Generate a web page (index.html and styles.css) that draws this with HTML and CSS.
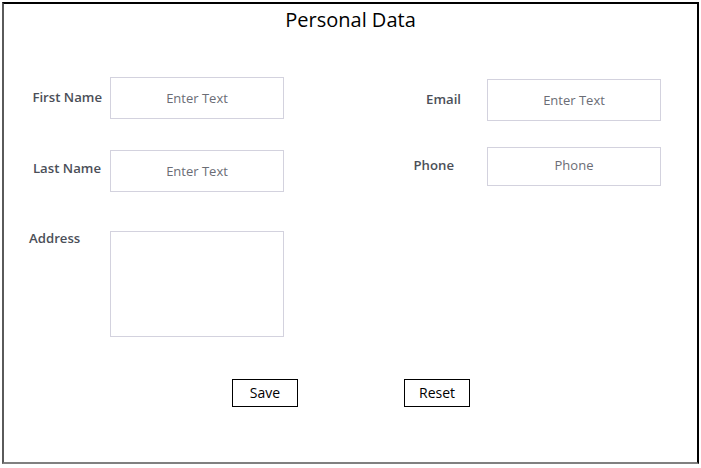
FILE: index.html
```html
<!DOCTYPE html>
<html>
<head>
    <title>Personal Data</title>
    <link rel="stylesheet" href="styles.css">
</head>
<body>
    <div class="frame">
        <h1 class="title">Personal Data</h1>
        <div class="columns">
            <div class="col col-left">
                <div class="field field-first">
                    <label for="firstName">First Name</label>
                    <input type="text" id="firstName" placeholder="Enter Text">
                </div>
                <div class="field field-last">
                    <label for="lastName">Last Name</label>
                    <input type="text" id="lastName" placeholder="Enter Text">
                </div>
                <div class="field field-address">
                    <label for="address">Address</label>
                    <textarea id="address"></textarea>
                </div>
            </div>
            <div class="col col-right">
                <div class="field field-email">
                    <label for="email">Email</label>
                    <input type="text" id="email" placeholder="Enter Text">
                </div>
                <div class="field field-phone">
                    <label for="phone">Phone</label>
                    <input type="text" id="phone" placeholder="Phone">
                </div>
            </div>
        </div>
        <div class="actions">
            <button type="button">Save</button>
            <button type="button">Reset</button>
        </div>
    </div>
</body>
</html>
```

FILE: styles.css
```css
body {
    margin: 0;
    background: #fff;
    font-family: "Open Sans", Arial, sans-serif;
}
.frame {
    box-sizing: border-box;
    width: 697px;
    height: 462px;
    margin: 2px 0 0 2px;
    border-top: 2px solid #000;
    border-right: 2px solid #000;
    border-left: 2px solid #5a5a5a;
    border-bottom: 2px solid #808080;
}
.title {
    margin: 0;
    padding-top: 2px;
    font-size: 20px;
    font-weight: 400;
    line-height: 28px;
    text-align: center;
    color: #000;
}
.columns {
    display: flex;
}
.col-left {
    width: 280px;
}
.col-right {
    width: 277px;
    margin-left: 100px;
}
.field {
    display: flex;
    align-items: center;
}
.field label {
    box-sizing: border-box;
    flex: none;
    margin-bottom: 3px;
    font-size: 13.2px;
    font-weight: 600;
    color: #4b4f58;
    text-align: right;
}
.col-left label {
    width: 106px;
    padding-right: 8px;
}
.col-right label {
    width: 103px;
}
input[type="text"], textarea {
    box-sizing: border-box;
    width: 174px;
    margin: 0;
    border: 1px solid #d3d2de;
    font-family: "Open Sans", Arial, sans-serif;
    font-size: 13px;
    text-align: center;
    color: #6e7078;
    background: #fff;
}
input[type="text"] {
    height: 42px;
}
input::placeholder {
    color: #6b6d75;
}
textarea {
    height: 106px;
    resize: none;
}
.field-first {
    margin-top: 43px;
}
.field-last {
    margin-top: 31px;
}
.field-last label {
    padding-right: 9px;
    margin-bottom: 6px;
}
.field-address {
    margin-top: 39px;
    align-items: flex-start;
}
.field-address label {
    padding-left: 25px;
    margin-top: -2px;
    text-align: left;
}
.field-email {
    margin-top: 45px;
}
.field-email label {
    padding-right: 26px;
}
.field-phone {
    margin-top: 26px;
}
.field-phone input {
    height: 39px;
    padding-bottom: 4px;
}
.field-phone label {
    padding-right: 33px;
    margin-bottom: 4px;
}
.actions {
    display: flex;
    gap: 106px;
    margin-top: 42px;
    padding-left: 228px;
}
button {
    box-sizing: border-box;
    width: 66px;
    height: 28px;
    padding: 0 0 2px;
    border: 1px solid #000;
    background: #fff;
    font-family: "Open Sans", Arial, sans-serif;
    font-size: 14px;
    color: #000;
}
```
